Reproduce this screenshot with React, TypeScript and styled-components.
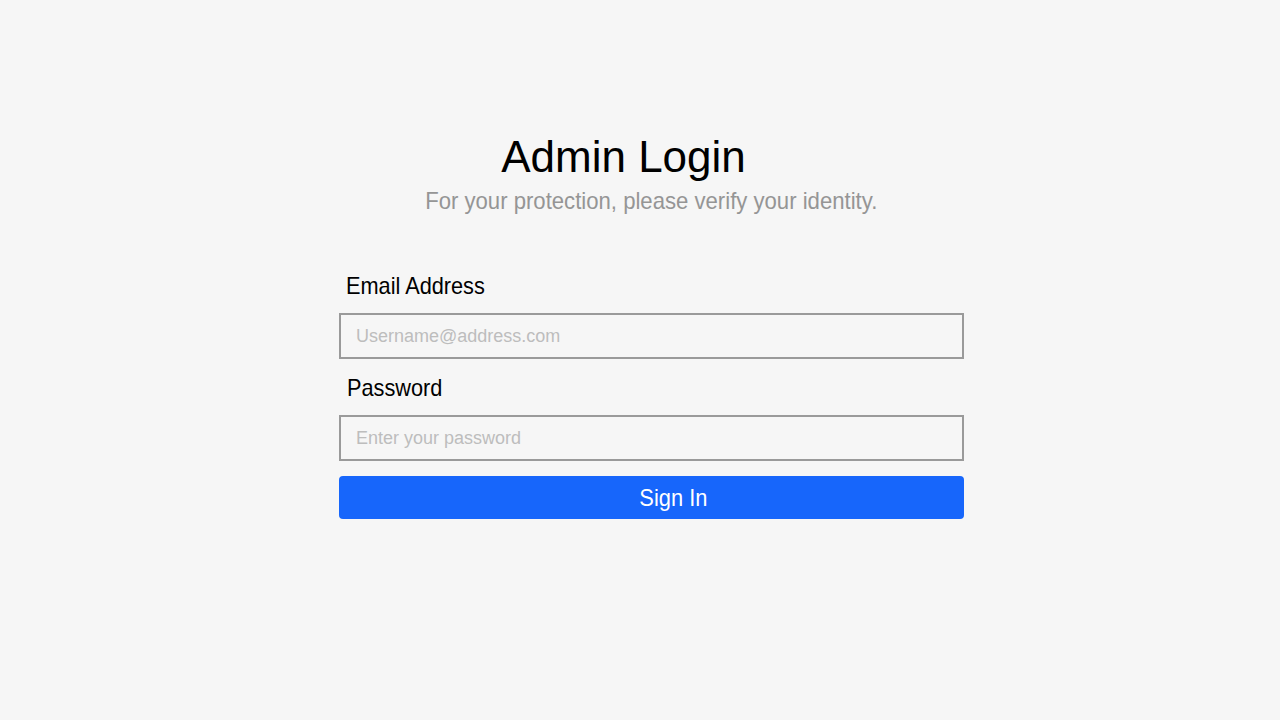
import styled, { createGlobalStyle } from 'styled-components';

const GlobalStyle = createGlobalStyle`
  html, body {
    margin: 0;
    padding: 0;
    background: #f6f6f6;
  }
  body {
    font-family: "Liberation Sans", Arial, sans-serif;
  }
`;

const Page = styled.div`
  min-height: 720px;
  padding: 135px 0 0 339px;
  box-sizing: border-box;
`;

const Card = styled.form`
  width: 625px;
  display: flex;
  flex-direction: column;
`;

const Header = styled.header`
  display: flex;
  flex-direction: column;
  align-items: center;
  margin-bottom: 57px;
`;

const Title = styled.h1`
  margin: 0 56px 0 0;
  font-weight: 400;
  font-size: 44px;
  line-height: 44px;
  color: #000;
`;

// the reference face is a slightly condensed grotesque
const Narrow = styled.span<{ $scale: number; $origin?: string }>`
  display: inline-block;
  transform: scaleX(${(p) => p.$scale});
  transform-origin: ${(p) => p.$origin ?? 'center'};
  white-space: nowrap;
`;

const Subtitle = styled.p`
  margin: 8px 0 0;
  font-size: 24px;
  line-height: 28px;
  color: #959595;
`;

const Label = styled.label<{ $indent: number }>`
  display: block;
  padding-left: ${(p) => p.$indent}px;
  font-size: 24px;
  line-height: 28px;
  color: #000;
  margin-bottom: 13px;
`;

const Input = styled.input`
  box-sizing: border-box;
  width: 625px;
  height: 46px;
  border: 2px solid #9a9a9a;
  background: transparent;
  padding: 0 15px;
  font-family: inherit;
  font-size: 18px;
  color: #000;
  outline: none;
  margin-bottom: 15px;

  &::placeholder {
    color: #bdbdbd;
  }
`;

const Button = styled.button`
  height: 43px;
  border: none;
  border-radius: 4px;
  background: #1766fb;
  color: #fff;
  font-family: inherit;
  font-size: 24px;
  padding: 0 0 0 44px;
  cursor: pointer;
`;

export default function App() {
  return (
    <>
      <GlobalStyle />
      <Page>
        <Card onSubmit={(e) => e.preventDefault()}>
          <Header>
            <Title>Admin Login</Title>
            <Subtitle>
              <Narrow $scale={0.922}>For your protection, please verify your identity.</Narrow>
            </Subtitle>
          </Header>
          <Label $indent={7} htmlFor="email">
            <Narrow $scale={0.905} $origin="left">Email Address</Narrow>
          </Label>
          <Input id="email" type="email" placeholder="Username@address.com" />
          <Label $indent={8} htmlFor="password">
            <Narrow $scale={0.905} $origin="left">Password</Narrow>
          </Label>
          <Input id="password" type="password" placeholder="Enter your password" />
          <Button type="submit">
            <Narrow $scale={0.91}>Sign In</Narrow>
          </Button>
        </Card>
      </Page>
    </>
  );
}
